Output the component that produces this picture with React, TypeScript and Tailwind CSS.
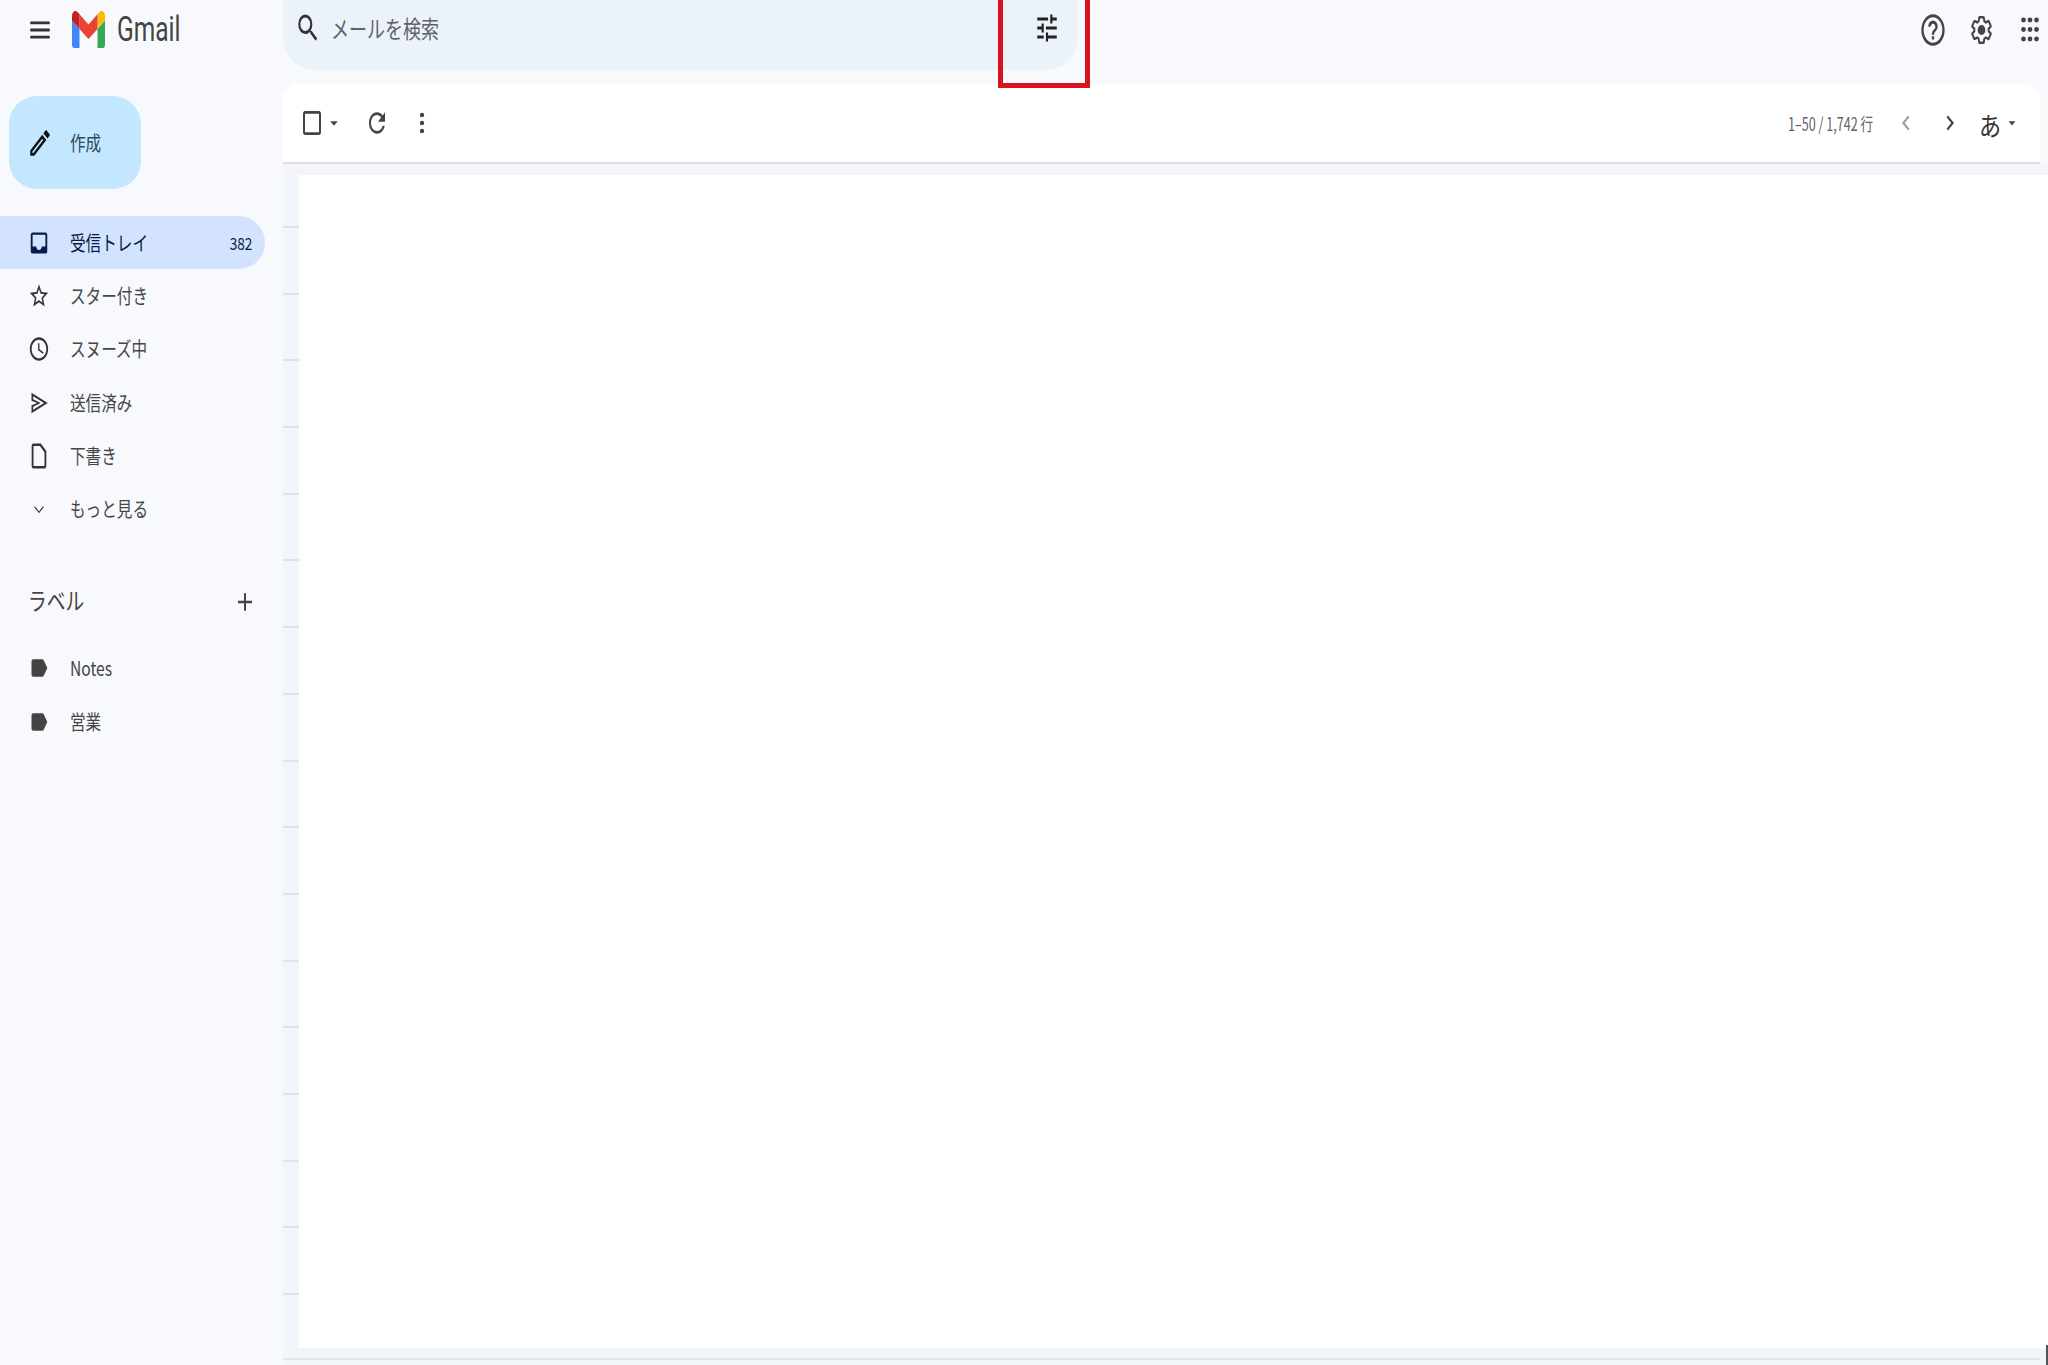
import React from "react";

const P = {
  menu: "M3 18h18v-2H3v2zm0-5h18v-2H3v2zm0-7v2h18V6H3z",
  search: "M15.5 14h-.79l-.28-.27A6.471 6.471 0 0 0 16 9.5 6.5 6.5 0 1 0 9.5 16c1.61 0 3.09-.59 4.23-1.57l.27.28v.79l5 4.99L20.49 19l-4.99-5zm-6 0C7.01 14 5 11.99 5 9.5S7.01 5 9.5 5 14 7.01 14 9.5 11.99 14 9.5 14z",
  tune: "M3 17v2h6v-2H3zM3 5v2h10V5H3zm10 16v-2h8v-2h-8v-2h-2v6h2zM7 9v2H3v2h4v2h2V9H7zm14 4v-2H11v2h10zm-6-4h2V7h4V5h-4V3h-2v6z",
  help: "M11 18h2v-2h-2v2zm1-16C6.48 2 2 6.48 2 12s4.48 10 10 10 10-4.48 10-10S17.52 2 12 2zm0 18c-4.41 0-8-3.59-8-8s3.59-8 8-8 8 3.59 8 8-3.59 8-8 8zm0-14c-2.21 0-4 1.79-4 4h2c0-1.1.9-2 2-2s2 .9 2 2c0 2-3 1.75-3 5h2c0-2.25 3-2.5 3-5 0-2.21-1.79-4-4-4z",
  gear: "M19.43 12.98c.04-.32.07-.64.07-.98s-.03-.66-.07-.98l2.11-1.65c.19-.15.24-.42.12-.64l-2-3.46c-.12-.22-.39-.3-.61-.22l-2.49 1c-.52-.4-1.08-.73-1.69-.98l-.38-2.65C14.46 2.18 14.25 2 14 2h-4c-.25 0-.46.18-.49.42l-.38 2.65c-.61.25-1.17.59-1.69.98l-2.49-1c-.23-.09-.49 0-.61.22l-2 3.46c-.13.22-.07.49.12.64l2.11 1.65c-.04.32-.07.65-.07.98s.03.66.07.98l-2.11 1.65c-.19.15-.24.42-.12.64l2 3.46c.12.22.39.3.61.22l2.49-1c.52.4 1.08.73 1.69.98l.38 2.65c.03.24.24.42.49.42h4c.25 0 .46-.18.49-.42l.38-2.65c.61-.25 1.17-.59 1.69-.98l2.49 1c.23.09.49 0 .61-.22l2-3.46c.12-.22.07-.49-.12-.64l-2.11-1.65z",
  refresh: "M17.65 6.35C16.2 4.9 14.21 4 12 4c-4.42 0-7.99 3.58-7.99 8s3.57 8 7.99 8c3.73 0 6.84-2.55 7.73-6h-2.08c-.82 2.33-3.04 4-5.65 4-3.31 0-6-2.69-6-6s2.69-6 6-6c1.66 0 3.14.69 4.22 1.78L13 11h7V4l-2.35 2.35z",
  inbox: "M19 3H5c-1.1 0-2 .9-2 2v14c0 1.1.9 2 2 2h14c1.1 0 2-.9 2-2V5c0-1.1-.9-2-2-2zm0 12h-4c0 1.66-1.35 3-3 3s-3-1.34-3-3H5V5h14v10z",
  star: "M22 9.24l-7.19-.62L12 2 9.19 8.63 2 9.24l5.46 4.73L5.82 21 12 17.27 18.18 21l-1.63-7.03L22 9.24zM12 15.4l-3.76 2.27 1-4.28-3.32-2.88 4.38-.38L12 6.1l1.71 4.04 4.38.38-3.32 2.88 1 4.28L12 15.4z",
  clock: "M11.99 2C6.47 2 2 6.48 2 12s4.47 10 9.99 10C17.52 22 22 17.52 22 12S17.52 2 11.99 2zM12 20c-4.42 0-8-3.58-8-8s3.58-8 8-8 8 3.58 8 8-3.58 8-8 8zm.5-13H11v6l5.25 3.15.75-1.23-4.5-2.67z",
  send: "M3 2.5 22.5 12 3 21.5V14l7-2-7-2V2.5zM5 5.7v2.8l9 3.5-9 3.5v2.8L18 12 5 5.7z",
  draft: "M6 2c-1.1 0-2 .9-2 2v16c0 1.1.9 2 2 2h12c1.1 0 2-.9 2-2V8l-6-6H6zm0 2h7l5 5v11H6V4z",
  more: "M7.2 9.4 12 14.2l4.8-4.8.9.9-5.7 5.7-5.7-5.7z",
  label: "M17.63 5.84C17.27 5.33 16.67 5 16 5L5 5.01C3.9 5.01 3 5.9 3 7v10c0 1.1.9 1.99 2 1.99L16 19c.67 0 1.27-.33 1.63-.84L22 12l-4.37-6.16z",
  pencil: "M3 17.25V21h3.75L17.81 9.94l-3.75-3.75L3 17.25zM5.92 19H5v-.92l9.06-9.06.92.92L5.92 19zM20.71 5.63l-2.34-2.34c-.2-.2-.45-.29-.71-.29s-.51.1-.7.29l-1.83 1.83 3.75 3.75 1.83-1.83c.39-.39.39-1.02 0-1.41z",
  plus: "M19 13h-6v6h-2v-6H5v-2h6V5h2v6h6v2z",
  left: "M15.41 7.41 14 6l-6 6 6 6 1.41-1.41L10.83 12z",
  right: "M10 6 8.59 7.41 13.17 12l-4.58 4.59L10 18l6-6z",
  caret: "M7 10l5 5 5-5z",
  box: "M19 3H5c-1.1 0-2 .9-2 2v14c0 1.1.9 2 2 2h14c1.1 0 2-.9 2-2V5c0-1.1-.9-2-2-2zm0 16H5V5h14v14z",
};

function Icon({ d, className }: { d: string; className: string }) {
  return (
    <svg viewBox="0 0 24 24" preserveAspectRatio="none" className={className} fill="currentColor" fillRule="evenodd">
      <path d={d} />
    </svg>
  );
}

function Squeezed({ children, className }: { children: React.ReactNode; className: string }) {
  return <span className={`inline-block origin-left scale-x-[0.78] whitespace-nowrap leading-none ${className}`}>{children}</span>;
}

function NavRow({ d, text, active, count, cls }: { d: string; text: string; active?: boolean; count?: string; cls?: string }) {
  return (
    <div className={`flex h-[53.3px] w-[265px] items-center rounded-r-full pl-[27px] ${active ? "bg-[#d3e3fd] text-[#041e49]" : "text-[#444746]"}`}>
      <div className="flex w-[24px] justify-center">
        <Icon d={d} className={cls ?? "h-[28px] w-[22px] text-[#333]"} />
      </div>
      <Squeezed className="ml-[19px] text-[20px]">{text}</Squeezed>
      {count && <span className="ml-auto mr-[13px] origin-right scale-x-[0.8] text-[17px] leading-none">{count}</span>}
    </div>
  );
}

export default function App() {
  return (
    <div className="relative flex h-[1365px] w-full flex-col overflow-hidden bg-[#f7f9fd] font-['Noto_Sans_CJK_JP','Noto_Sans',sans-serif] text-[#444746]">
      {/* header */}
      <header className="flex h-[84px] shrink-0 items-start">
        <div className="flex h-[59px] w-[283px] shrink-0 items-center pl-[27px]">
          <Icon d={P.menu} className="h-[34px] w-[26px] text-[#333]" />
          <svg viewBox="52 42 88 66" preserveAspectRatio="none" className="ml-[19px] h-[37px] w-[33px]">
            <path fill="#4285f4" d="M58 108h14V74L52 59v43c0 3.32 2.69 6 6 6" />
            <path fill="#34a853" d="M120 108h14c3.32 0 6-2.69 6-6V59l-20 15" />
            <path fill="#fbbc04" d="M120 48v26l20-15v-8c0-7.42-8.47-11.65-14.4-7.2" />
            <path fill="#ea4335" d="M72 74V48l24 18 24-18v26L96 92" />
            <path fill="#c5221f" d="M52 51v8l20 15V48l-5.6-4.2c-5.94-4.45-14.4-.22-14.4 7.2" />
          </svg>
          <span className="ml-[12px] inline-block origin-left scale-x-[0.7] font-['Roboto',sans-serif] text-[35px] leading-none text-[#444]">Gmail</span>
        </div>
        <div className="flex h-[70px] w-[795px] items-center rounded-b-[32px] bg-[#ecf2fa] pb-[14px] pl-[12px]">
          <Icon d={P.search} className="h-[36px] w-[26px] text-[#333]" />
          <span className="ml-[10px] inline-block origin-left scale-x-[0.75] whitespace-nowrap text-[24px] leading-none text-[#5f6368]">メールを検索</span>
          <div className="ml-auto mr-[18px]">
            <Icon d={P.tune} className="h-[36px] w-[26px] text-[#222]" />
          </div>
        </div>
        <div className="ml-auto flex h-[59px] items-center pr-[9px]">
          <Icon d={P.help} className="h-[38px] w-[28px] text-[#444]" />
          <svg viewBox="0 0 24 24" preserveAspectRatio="none" className="ml-[21px] h-[36px] w-[27px] text-[#444]" fill="none">
            <path d={P.gear} stroke="currentColor" strokeWidth="2" strokeLinejoin="round" transform="translate(1.8 1.8) scale(.85)" />
            <circle cx="12" cy="12" r="3.4" fill="currentColor" />
          </svg>
          <svg viewBox="0 0 18 27" className="ml-[26px] h-[27px] w-[18px] text-[#444]" fill="currentColor">
            {[4, 13.5, 23].flatMap((y) => [2.5, 9, 15.5].map((x) => <circle key={`${x}-${y}`} cx={x} cy={y} r="2.4" />))}
          </svg>
        </div>
      </header>

      <div className="flex min-h-0 flex-1">
        {/* sidebar */}
        <aside className="w-[283px] shrink-0">
          <div className="ml-[9px] mt-[12px] flex h-[93px] w-[132px] items-center rounded-[28px] bg-[#c2e7ff] pl-[18px] text-[#2f4a5c]">
            <Icon d={P.pencil} className="h-[34px] w-[26px] text-[#111]" />
            <Squeezed className="ml-[17px] text-[20px]">作成</Squeezed>
          </div>
          <div className="mt-[27px]">
            <NavRow d={P.inbox} text="受信トレイ" active count="382" cls="h-[28px] w-[22px] text-[#041e49]" />
            <NavRow d={P.star} text="スター付き" />
            <NavRow d={P.clock} text="スヌーズ中" />
            <NavRow d={P.send} text="送信済み" cls="h-[26px] w-[20px] text-[#333]" />
            <NavRow d={P.draft} text="下書き" cls="h-[30px] w-[22px] text-[#333]" />
            <NavRow d={P.more} text="もっと見る" cls="h-[26px] w-[20px] text-[#333]" />
          </div>
          <div className="mt-[38px] flex h-[53px] w-[265px] items-center pl-[28px] pr-[8px]">
            <Squeezed className="text-[24px] text-[#444]">ラベル</Squeezed>
            <Icon d={P.plus} className="ml-auto mt-[3px] h-[30px] w-[24px] text-[#444]" />
          </div>
          <div className="mt-[15px]">
            <NavRow d={P.label} text="Notes" cls="h-[30px] w-[20px] text-[#444]" />
            <NavRow d={P.label} text="営業" cls="h-[30px] w-[20px] text-[#444]" />
          </div>
        </aside>

        {/* main */}
        <main className="flex min-w-0 flex-1 flex-col">
          <div className="mr-[8px] flex h-[80px] shrink-0 items-center rounded-t-[16px] border-b-2 border-[#dcdee0] bg-white pl-[17px] pr-[20px]">
            <Icon d={P.box} className="h-[32px] w-[24px] text-[#444]" />
            <Icon d={P.caret} className="ml-[1px] h-[22px] w-[18px] text-[#444]" />
            <Icon d={P.refresh} className="ml-[22px] h-[32px] w-[24px] text-[#444]" />
            <svg viewBox="0 0 6 24" className="ml-[30px] h-[24px] w-[6px] text-[#444]" fill="currentColor">
              <circle cx="3" cy="4" r="2.2" />
              <circle cx="3" cy="12" r="2.2" />
              <circle cx="3" cy="20" r="2.2" />
            </svg>
            <div className="ml-auto flex items-center">
              <span className="w-[86px] font-['Noto_Sans_CJK_JP','Roboto',sans-serif] text-[18px] leading-none text-[#5f6368]">
                <span className="inline-block origin-left scale-x-[0.7] whitespace-nowrap leading-none">1–50 / 1,742 行</span>
              </span>
              <Icon d={P.left} className="ml-[20px] h-[30px] w-[24px] text-[#9aa0a6]" />
              <Icon d={P.right} className="ml-[20px] h-[30px] w-[24px] text-[#444]" />
              <span className="ml-[17px] mt-[3px] inline-block origin-left scale-x-[0.85] text-[26px] leading-none text-[#333]">あ</span>
              <Icon d={P.caret} className="-ml-[1px] h-[20px] w-[16px] text-[#444]" />
            </div>
          </div>
          <div className="h-[11px] shrink-0 bg-[#f3f5fa]" />
          <div className="flex min-h-0 flex-1">
            <div className="w-[16px] shrink-0 bg-[#f2f5fb] bg-[repeating-linear-gradient(to_bottom,transparent_0,transparent_51px,#dfe2e8_51px,#dfe2e8_53px,transparent_53px,transparent_66.7px)]" />
            <div className="flex-1 bg-white" />
          </div>
          <div className="relative h-[17px] shrink-0 bg-[#f2f5f9]">
            <div className="absolute bottom-[5px] left-0 right-[8px] h-[2px] bg-[#e2e4e8]" />
          </div>
        </main>
      </div>

      {/* annotation */}
      <div className="absolute left-[998px] top-[-6px] h-[94px] w-[92px] border-[5px] border-[#d8131f]" />
      <div className="absolute bottom-0 right-0 h-[20px] w-[2px] bg-[#555]" />
    </div>
  );
}
